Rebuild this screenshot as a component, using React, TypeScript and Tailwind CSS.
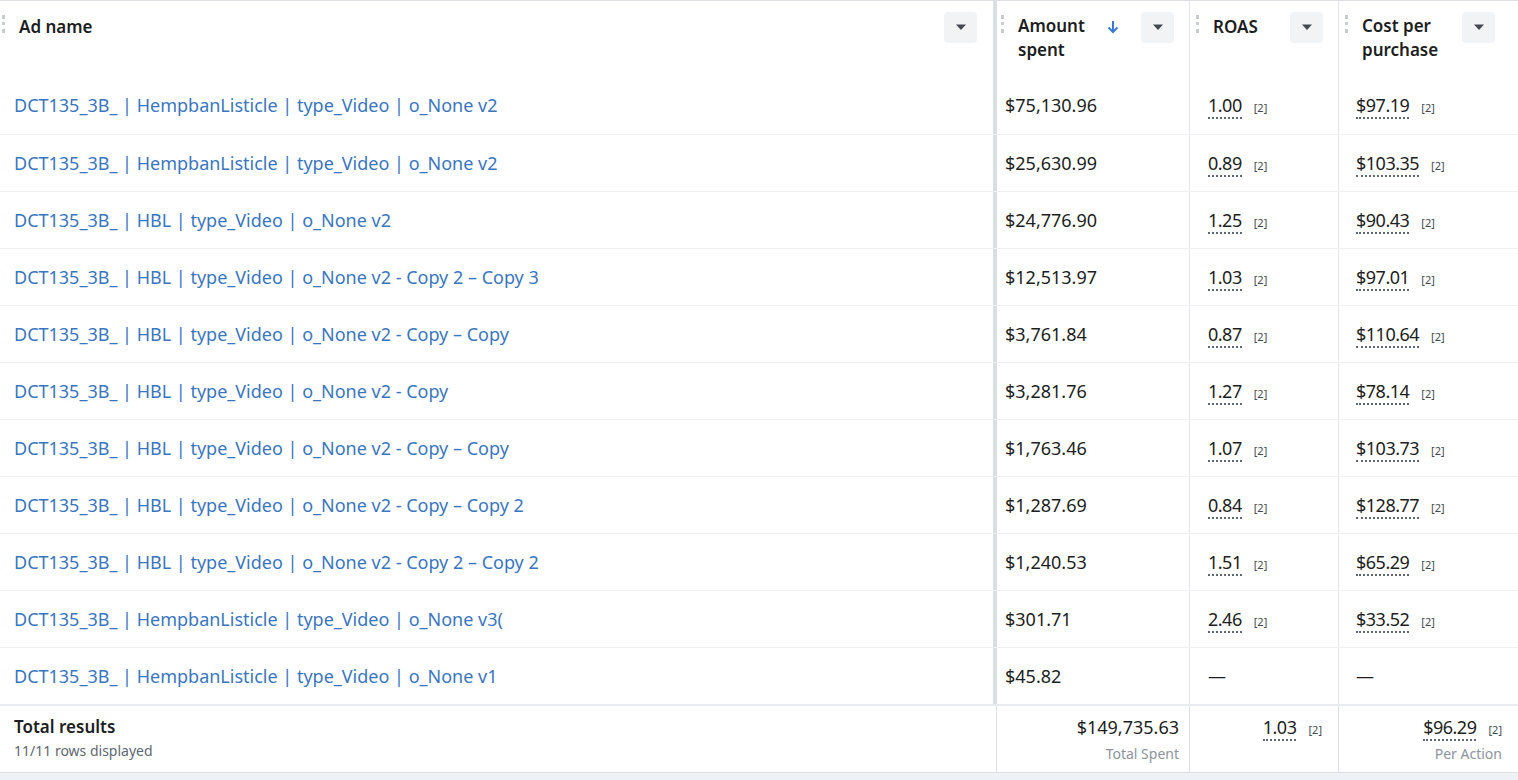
const rows: [string, string, string, string][] = [
  ['DCT135_3B_ | HempbanListicle | type_Video | o_None v2', '$75,130.96', '1.00', '$97.19'],
  ['DCT135_3B_ | HempbanListicle | type_Video | o_None v2', '$25,630.99', '0.89', '$103.35'],
  ['DCT135_3B_ | HBL | type_Video | o_None v2', '$24,776.90', '1.25', '$90.43'],
  ['DCT135_3B_ | HBL | type_Video | o_None v2 - Copy 2 – Copy 3', '$12,513.97', '1.03', '$97.01'],
  ['DCT135_3B_ | HBL | type_Video | o_None v2 - Copy – Copy', '$3,761.84', '0.87', '$110.64'],
  ['DCT135_3B_ | HBL | type_Video | o_None v2 - Copy', '$3,281.76', '1.27', '$78.14'],
  ['DCT135_3B_ | HBL | type_Video | o_None v2 - Copy – Copy', '$1,763.46', '1.07', '$103.73'],
  ['DCT135_3B_ | HBL | type_Video | o_None v2 - Copy – Copy 2', '$1,287.69', '0.84', '$128.77'],
  ['DCT135_3B_ | HBL | type_Video | o_None v2 - Copy 2 – Copy 2', '$1,240.53', '1.51', '$65.29'],
  ['DCT135_3B_ | HempbanListicle | type_Video | o_None v3(', '$301.71', '2.46', '$33.52'],
  ['DCT135_3B_ | HempbanListicle | type_Video | o_None v1', '$45.82', '', ''],
];

function Caret() {
  return (
    <div className="w-[33px] h-[31px] rounded bg-[#f2f3f5] flex items-center justify-center">
      <svg width="12" height="7" viewBox="0 0 12 7"><path d="M1 0.5h10L6 6z" fill="#444950" /></svg>
    </div>
  );
}

function Grip() {
  return <div className="w-[3px] h-[18px] border-l-[3px] border-dotted border-[#c8ccd1]" />;
}

function Metric({ v }: { v: string }) {
  if (!v) return <span className="text-[#1c1e21]">—</span>;
  return (
    <span>
      <span className="border-b-2 border-dotted border-[#606770] leading-[18px] tracking-[-0.5px]">{v}</span>
      <span className="ml-3 text-[11px] text-[#444950]">[2]</span>
    </span>
  );
}

export default function App() {
  const cols = 'grid grid-cols-[993px_4px_193px_149px_173px]';
  return (
    <div className="w-[1518px] h-[780px] bg-white text-[#1c1e21] overflow-hidden" style={{ fontFamily: '"Noto Sans", Roboto, sans-serif' }}>
      <div className="border-t border-[#dddfe2]">
        <div className={`${cols} h-[76px] text-[17px] font-semibold`}>
          <div className="flex items-start pt-[14px] pl-[2px] pr-[16px]">
            <Grip />
            <span className="ml-[14px] mt-[-1px] flex-1">Ad name</span>
            <div className="mt-[-3px]"><Caret /></div>
          </div>
          <div className="bg-[#dadde1]" />
          <div className="flex items-start pt-[14px] pl-[4px] pr-[15px] border-r border-[#e4e6eb]">
            <Grip />
            <span className="ml-[14px] mt-[-1px] leading-[24px] flex-1">Amount<br />spent</span>
            <svg className="mt-[5px] mr-[22px]" width="12" height="14" viewBox="0 0 12 14"><path d="M6 1v11M1.5 7.5 6 12l4.5-4.5" stroke="#3a7ad0" strokeWidth="2" fill="none" /></svg>
            <div className="mt-[-3px]"><Caret /></div>
          </div>
          <div className="flex items-start pt-[14px] pl-[6px] pr-[15px] border-r border-[#e4e6eb]">
            <Grip />
            <span className="ml-[14px] mt-[-1px] flex-1">ROAS</span>
            <div className="mt-[-3px]"><Caret /></div>
          </div>
          <div className="flex items-start pt-[14px] pl-[6px] pr-[17px]">
            <Grip />
            <span className="ml-[14px] mt-[-1px] leading-[24px] flex-1">Cost per<br />purchase</span>
            <div className="mt-[-3px]"><Caret /></div>
          </div>
        </div>
        {rows.map((r, i) => (
          <div key={i} className={`${cols} h-[57px] text-[18px] ${i > 0 ? 'border-t border-[#eef0f2]' : ''}`}>
            <div className="flex items-center pl-[14px] text-[#3a76be]">{r[0]}</div>
            <div className="bg-[#dadde1]" />
            <div className="flex items-center pl-[8px] border-r border-[#e4e6eb]">{r[1]}</div>
            <div className="flex items-center pl-[18px] border-r border-[#e4e6eb]"><Metric v={r[2]} /></div>
            <div className="flex items-center pl-[17px]"><Metric v={r[3]} /></div>
          </div>
        ))}
        <div className={`${cols} h-[68px] border-t-2 border-[#e9ebee]`}>
          <div className="pl-[14px] pt-[8px]">
            <div className="text-[17px] font-semibold">Total results</div>
            <div className="text-[14px] text-[#606770]">11/11 rows displayed</div>
          </div>
          <div className="border-r border-[#dddfe2]" />
          <div className="text-right pr-[10px] pt-[8px] border-r border-[#dddfe2]">
            <div className="text-[18px]">$149,735.63</div>
            <div className="text-[14px] text-[#8d949e] mt-[2px]">Total Spent</div>
          </div>
          <div className="text-right pr-[16px] pt-[8px] border-r border-[#dddfe2]">
            <div className="text-[18px]"><Metric v="1.03" /></div>
          </div>
          <div className="text-right pr-[10px] pt-[8px]">
            <div className="text-[18px]"><Metric v="$96.29" /></div>
            <div className="text-[14px] text-[#8d949e] mt-[2px]">Per Action</div>
          </div>
        </div>
        <div className="h-[10px] bg-[#eef1f5] border-t border-[#dddfe2]" />
      </div>
    </div>
  );
}
